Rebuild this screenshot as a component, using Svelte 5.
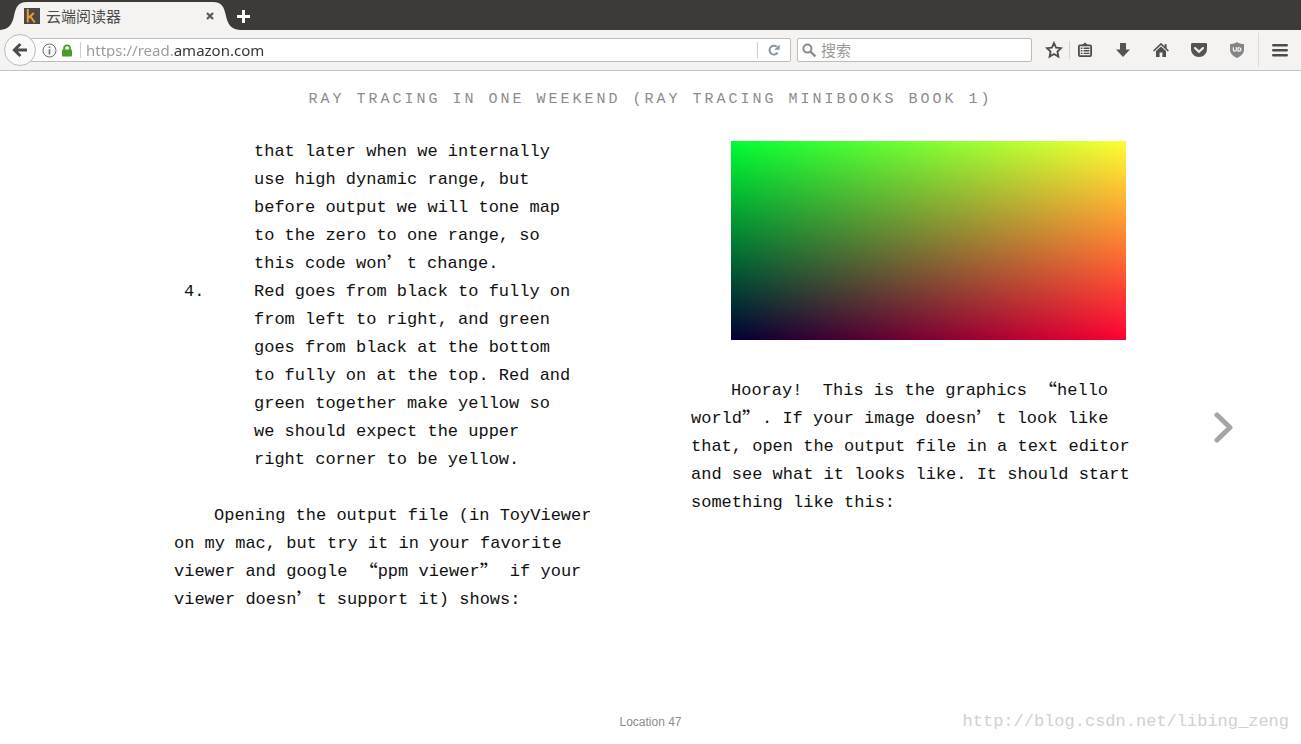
<script>
  let address = $state('https://read.amazon.com');
  let query = $state('');

  const listTail = [
    'that later when we internally',
    'use high dynamic range, but',
    'before output we will tone map',
    'to the zero to one range, so',
    'this code won’t change.'
  ];
  const listItem = [
    'Red goes from black to fully on',
    'from left to right, and green',
    'goes from black at the bottom',
    'to fully on at the top. Red and',
    'green together make yellow so',
    'we should expect the upper',
    'right corner to be yellow.'
  ];
  const opening = [
    'Opening the output file (in ToyViewer',
    'on my mac, but try it in your favorite',
    'viewer and google “ppm viewer” if your',
    'viewer doesn’t support it) shows:'
  ];
  const hooray = [
    'Hooray!\u00a0 This is the graphics “hello',
    'world”. If your image doesn’t look like',
    'that, open the output file in a text editor',
    'and see what it looks like. It should start',
    'something like this:'
  ];

  // Curly quotes are set in the full-width face, so they are split out.
  const pieces = (line) => line.split(/([“”’])/).filter((p) => p !== '');
  const isQuote = (p) => p === '“' || p === '”' || p === '’';
</script>

{#snippet lines(list)}
  {#each list as line, i}
    {#if i > 0}<br />{/if}{#each pieces(line) as p}{#if isQuote(p)}<span class="wide" lang="zh-CN">{p}</span>{:else}{p}{/if}{/each}
  {/each}
{/snippet}

<div class="window">
  <header class="tabstrip">
    <div class="tab">
      <svg class="tabshape" viewBox="0 0 240 28" width="240" height="28" preserveAspectRatio="none" aria-hidden="true">
        <path d="M0 28C9 27 12 23 14 14C16 5 18 0 27 0H213C222 0 224 5 226 14C228 23 231 27 240 28Z" fill="#f4f3f1" />
      </svg>
      <svg class="favicon" width="16" height="16" viewBox="0 0 16 16" aria-hidden="true">
        <rect width="16" height="16" fill="#494747" />
        <path d="M3.8 1V14.5M9.8 5L4.6 9.8M6.4 8.4L10.8 14.5" fill="none" stroke="#f09a30" stroke-width="2" />
      </svg>
      <span class="tabtitle">云端阅读器</span>
      <button class="close" aria-label="Close tab">
        <svg width="8" height="8" viewBox="0 0 8 8"><path d="M1 1L7 7M7 1L1 7" stroke="#5a5956" stroke-width="2.2" /></svg>
      </button>
    </div>
    <button class="newtab" aria-label="New tab">
      <svg width="13" height="13" viewBox="0 0 13 13"><path d="M6.5 0V13M0 6.5H13" stroke="#fff" stroke-width="3" /></svg>
    </button>
  </header>

  <nav class="toolbar">
    <button class="back" aria-label="Back">
      <svg width="16" height="16" viewBox="0 0 16 16"><path d="M8.4 2L2.4 8L8.4 14M3 8H15" fill="none" stroke="#4c4c4c" stroke-width="3" /></svg>
    </button>
    <div class="urlbar">
      <svg width="15" height="15" viewBox="0 0 15 15" aria-hidden="true">
        <circle cx="7.5" cy="7.5" r="6.5" fill="none" stroke="#6c6c6c" />
        <path d="M7.5 6.2V11.4M7.5 3.4V5" stroke="#6c6c6c" stroke-width="1.6" />
      </svg>
      <svg class="lock" width="10" height="13" viewBox="0 0 10 13" aria-hidden="true">
        <path d="M2.2 6V3.8C2.2 0.6 7.8 0.6 7.8 3.8V6" fill="none" stroke="#4d9a26" stroke-width="1.9" />
        <rect y="5.4" width="10" height="7" rx="1" fill="#4d9a26" />
      </svg>
      <input class="address" type="text" aria-label="Address" bind:value={address} />
      <button class="reload" aria-label="Reload">
        <svg width="12" height="12" viewBox="0 0 12 12">
          <path d="M9.6 8.6A4.4 4.4 0 1 1 8.8 2.8" fill="none" stroke="#8797a3" stroke-width="2" />
          <path d="M11.6 0.4V5.8H6.2Z" fill="#8797a3" />
        </svg>
      </button>
    </div>
    <div class="search">
      <svg width="15" height="15" viewBox="0 0 15 15" aria-hidden="true">
        <circle cx="5.4" cy="5.6" r="4" fill="none" stroke="#8c8c8c" stroke-width="2" />
        <path d="M8.4 8.6L13.4 13.4" stroke="#8c8c8c" stroke-width="2.4" />
      </svg>
      <input type="text" aria-label="搜索" placeholder="搜索" bind:value={query} />
    </div>
    <button class="star" aria-label="Bookmark this page">
      <svg width="18" height="18" viewBox="0 0 18 18"><path d="M9 2L11.1 6.6L16 7.1L12.4 10.5L13.4 15.6L9 13L4.6 15.6L5.6 10.5L2 7.1L6.9 6.6Z" fill="none" stroke="#4c4c4c" stroke-width="1.8" /></svg>
    </button>
    <button class="library" aria-label="Bookmarks list">
      <svg width="14" height="15" viewBox="0 0 14 15">
        <rect x="0.9" y="3.4" width="12.2" height="10.7" rx="1" fill="none" stroke="#4c4c4c" stroke-width="1.8" />
        <path d="M3.6 3.4L7 0.4L10.4 3.4Z" fill="#4c4c4c" />
        <path d="M2.8 6.2H4.4M5.6 6.2H11.4M2.8 8.8H4.4M5.6 8.8H11.4M2.8 11.4H4.4M5.6 11.4H11.4" stroke="#4c4c4c" stroke-width="1.4" />
      </svg>
    </button>
    <button class="tool" aria-label="Downloads">
      <svg width="14" height="14" viewBox="0 0 14 14"><path d="M4 0H10V6.4H14L7 14L0 6.4H4Z" fill="#545454" /></svg>
    </button>
    <button class="tool" aria-label="Home">
      <svg width="16" height="14" viewBox="0 0 16 14">
        <path d="M0.6 8L8 1L15.4 8" fill="none" stroke="#505050" stroke-width="1.7" />
        <path d="M11.6 1.2H13.6V5.6L11.6 3.8Z" fill="#505050" />
        <path d="M3 8L8 3.4L13 8V14H9.4V9.6H6.6V14H3Z" fill="#505050" />
      </svg>
    </button>
    <button class="tool" aria-label="Pocket">
      <svg width="16" height="14" viewBox="0 0 16 14">
        <path d="M1.4 0H14.6C15.4 0 16 0.6 16 1.4V6C16 10.6 12.4 14 8 14S0 10.6 0 6V1.4C0 0.6 0.6 0 1.4 0Z" fill="#545454" />
        <path d="M4 5L8 8.8L12 5" fill="none" stroke="#f4f3f1" stroke-width="2.1" stroke-linecap="round" />
      </svg>
    </button>
    <button class="tool" aria-label="Content blocker">
      <svg width="14" height="16" viewBox="0 0 14 16">
        <path d="M7 0C9 1.4 11.4 2 14 2V7.6C14 11.6 11 14.4 7 16C3 14.4 0 11.6 0 7.6V2C2.6 2 5 1.4 7 0Z" fill="#858585" />
        <path d="M3.3 5.2V7.8C3.3 9.6 6.3 9.6 6.3 7.8V5.2M8 5.2V9.1H8.8C11.6 9.1 11.6 5.7 8.8 5.7H8" fill="none" stroke="#fff" stroke-width="1.1" />
      </svg>
    </button>
    <button class="menu" aria-label="Open menu">
      <svg width="16" height="14" viewBox="0 0 16 14"><path d="M1.3 2.2H14.7M1.3 7.2H14.7M1.3 12.2H14.7" stroke="#4c4c4c" stroke-width="2.6" stroke-linecap="round" /></svg>
    </button>
  </nav>

  <main class="reader">
    <h1>RAY TRACING IN ONE WEEKEND (RAY TRACING MINIBOOKS BOOK 1)</h1>
    <div class="spread">
      <section class="page left">
        <p class="tail">{@render lines(listTail)}</p>
        <div class="item">
          <span>4.</span>
          <p>{@render lines(listItem)}</p>
        </div>
        <p class="para">{@render lines(opening)}</p>
      </section>
      <section class="page">
        <div class="render" role="img" aria-label="Colour gradient"></div>
        <p class="indent">{@render lines(hooray)}</p>
      </section>
      <button class="next" aria-label="Next page">
        <svg width="20" height="32" viewBox="0 0 20 32"><path d="M3 4L16 16.5L3 29" fill="none" stroke="#a6a6a6" stroke-width="5" stroke-linecap="round" stroke-linejoin="round" /></svg>
      </button>
    </div>
    <footer>
      <span class="location">Location 47</span>
      <span class="credit">http://blog.csdn.net/libing_zeng</span>
    </footer>
  </main>
</div>

<style>
  :global(body) {
    background: #fff;
  }
  .window {
    display: flex;
    flex-direction: column;
    min-height: 100vh;
    font-family: "Noto Sans", "Noto Sans CJK SC", sans-serif;
  }
  button {
    display: flex;
    align-items: center;
    justify-content: center;
    padding: 0;
    border: 0;
    background: none;
    flex: none;
  }
  svg {
    display: block;
    flex: none;
  }
  input {
    min-width: 0;
    flex: 1;
    padding: 0;
    border: 0;
    outline: 0;
    background: none;
    font: inherit;
  }

  .tabstrip {
    display: flex;
    align-items: flex-end;
    height: 30px;
    background: #3c3b37;
  }
  .tab {
    position: relative;
    display: flex;
    align-items: center;
    box-sizing: border-box;
    width: 240px;
    height: 28px;
    padding: 0 25px 0 24px;
  }
  .tabshape {
    position: absolute;
    inset: 0;
  }
  .favicon,
  .tabtitle,
  .close {
    position: relative;
  }
  .tabtitle {
    flex: 1;
    margin-left: 6px;
    font-family: "Noto Sans CJK SC", sans-serif;
    font-size: 15px;
    line-height: 28px;
    color: #4c4c4c;
  }
  .close {
    width: 10px;
    height: 20px;
  }
  .newtab {
    width: 26px;
    height: 28px;
    margin-left: -10px;
  }

  .toolbar {
    display: flex;
    align-items: center;
    box-sizing: border-box;
    height: 41px;
    padding-left: 4px;
    border-bottom: 1px solid #c6c3bf;
    background: #f4f3f1;
  }
  .back {
    z-index: 1;
    box-sizing: border-box;
    width: 32px;
    height: 32px;
    border: 1px solid #bdbab6;
    border-radius: 50%;
    background: #fafafa;
  }
  .urlbar,
  .search {
    display: flex;
    align-items: center;
    box-sizing: border-box;
    height: 24px;
    border: 1px solid #bfbcb8;
    border-radius: 2px;
    background: #fff;
    font-size: 15px;
  }
  .urlbar {
    flex: 1;
    min-width: 0;
    margin-left: -6px;
    padding-left: 11px;
  }
  .lock {
    margin: 0 8px 0 5px;
  }
  .address {
    height: 16px;
    padding-left: 5px;
    border-left: 1px solid #cfcfcf;
    line-height: 16px;
    background: linear-gradient(to right, #999 93px, #333 93px);
    background-clip: text;
    -webkit-background-clip: text;
    color: transparent;
    caret-color: #333;
  }
  .reload {
    width: 33px;
    height: 16px;
    border-left: 1px solid #cfcfcf;
  }
  .search {
    width: 235px;
    margin: 0 6px;
    padding-left: 4px;
    gap: 4px;
    font-family: "Noto Sans CJK SC", sans-serif;
  }
  .search input {
    height: 20px;
    padding-bottom: 2px;
  }
  .search input::placeholder {
    color: #999;
    opacity: 1;
  }
  .star {
    width: 32px;
    height: 18px;
    border-right: 1px solid #d4d2cf;
  }
  .library {
    width: 30px;
    height: 28px;
    margin: 0 4px 2px 0;
  }
  .tool {
    width: 38px;
    height: 30px;
  }
  .menu {
    width: 43px;
    height: 34px;
    margin-left: 2px;
    border-left: 1px solid #dedcd9;
  }

  .reader {
    display: flex;
    flex: 1;
    flex-direction: column;
    font-family: "Liberation Mono", monospace;
    font-size: 17px;
    line-height: 28px;
    color: #111;
  }
  h1 {
    margin: 15px 0 24px;
    font-size: 15px;
    font-weight: 400;
    line-height: 28px;
    letter-spacing: 3px;
    text-align: center;
    color: #8c8c8c;
  }
  .spread {
    display: grid;
    flex: 1;
    grid-template-columns: 1fr minmax(0, 517px) minmax(0, 436px) 1fr;
  }
  .left {
    grid-column: 2;
  }
  .page {
    white-space: nowrap;
  }
  p {
    margin: 0;
  }
  .tail {
    padding-left: 80px;
  }
  .item {
    display: grid;
    grid-template-columns: 70px 1fr;
    padding-left: 10px;
  }
  .para {
    margin-top: 28px;
  }
  .para,
  .indent {
    text-indent: 40px;
  }
  .wide {
    display: inline-block;
    width: 20px;
    font-family: "Noto Sans CJK SC", sans-serif;
    font-size: 20px;
    line-height: 20px;
    text-indent: 0;
    vertical-align: -4px;
  }
  .render {
    height: 199px;
    margin: 3px 1px 37px 40px;
    background-color: #003;
    background-image:
      linear-gradient(to right, #000, #f00),
      linear-gradient(to top, #000, #0f0);
    background-blend-mode: screen;
  }
  .next {
    align-self: center;
    justify-self: center;
    width: 36px;
    height: 60px;
    margin: 14px 0 0 20px;
  }
  footer {
    display: grid;
    grid-template-columns: 1fr auto 1fr;
    align-items: center;
    height: 40px;
    padding-bottom: 2px;
  }
  .location {
    grid-column: 2;
    font-family: "Liberation Sans", Arial, sans-serif;
    font-size: 12px;
    color: #8c8c8c;
  }
  .credit {
    justify-self: end;
    margin-right: 12px;
    color: #d2d2ce;
  }
</style>
